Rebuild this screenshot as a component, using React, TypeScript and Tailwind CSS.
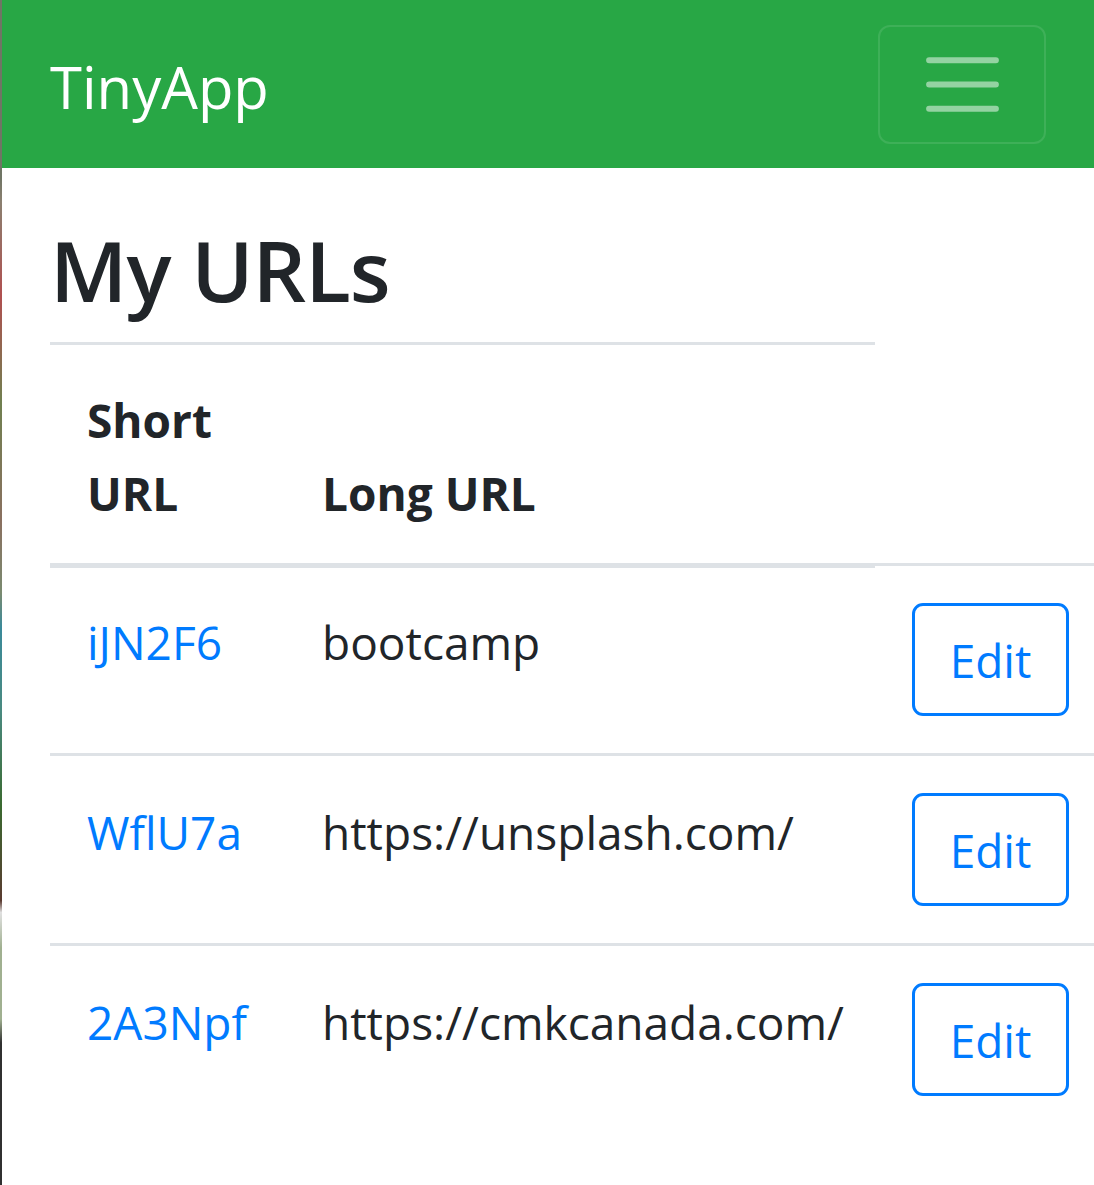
import React from "react";

const rows = [
  { short: "iJN2F6", long: "bootcamp" },
  { short: "WflU7a", long: "https://unsplash.com/" },
  { short: "2A3Npf", long: "https://cmkcanada.com/" },
];

function TogglerIcon() {
  return (
    <svg width="91" height="91" viewBox="0 0 30 30" fill="none">
      <path
        d="M4 7h22M4 15h22M4 23h22"
        stroke="rgba(255,255,255,0.5)"
        strokeWidth="2"
        strokeLinecap="round"
        strokeMiterlimit="10"
      />
    </svg>
  );
}

export default function App() {
  return (
    <div className="flex min-h-[1185px] w-full overflow-hidden bg-white font-['Open_Sans',sans-serif] text-[#212529]">
      <div className="w-[2px] shrink-0 bg-[linear-gradient(to_bottom,#707565_0%,#707565_15%,#8a8070_17%,#b05050_25%,#708050_34%,#8a7060_44%,#7a8a70_50%,#3a8a9a_53%,#4a8a80_60%,#3a6a30_68%,#5a3a30_76%,#e0e0e0_77%,#a0b090_80%,#a0b090_86%,#303030_88%,#303030_100%)]" />
      <div className="flex min-w-0 flex-1 flex-col">
        <nav className="flex h-[168px] items-start justify-between bg-[#28a745] pl-[48px] pr-[48px]">
          <div className="pt-[42px] text-[58px] leading-[90px] text-white">TinyApp</div>
          <div className="mt-[25px] flex h-[119px] w-[168px] items-center justify-center rounded-[12px] border-2 border-white/10">
            <TogglerIcon />
          </div>
        </nav>

        <main className="pl-[48px]">
          <h1 className="mt-[51px] mb-[22px] text-[84px] font-semibold leading-[101px] tracking-[-1px] text-[#212529]">
            My URLs
          </h1>

          <div className="w-[1300px]">
            <div className="flex w-[825px] border-t-[3px] border-b-[5px] border-[#dee2e6] text-[46px] font-bold leading-[73px]">
              <div className="w-[235px] pl-[37px] pt-[39px] pb-[33px]">
                Short
                <br />
                URL
              </div>
              <div className="flex w-[590px] items-end pl-[37px] pb-[33px]">Long URL</div>
            </div>

            {rows.map((r, i) => (
              <div
                key={r.short}
                className={`relative flex border-t-[3px] border-[#dee2e6] text-[46px] leading-[72px] ${
                  i === 0 ? "-mt-[5px]" : ""
                }`}
              >
                <div className="w-[235px] pl-[37px] pt-[40px] text-[#007bff]">{r.short}</div>
                <div className="w-[590px] pl-[37px] pt-[40px] text-[#212529]">{r.long}</div>
                <div className="pl-[37px] pt-[37px] pb-[37px]">
                  <button className="flex h-[113px] w-[157px] items-center justify-center rounded-[11px] border-[3px] border-[#007bff] bg-transparent text-[46px] leading-none text-[#007bff]">
                    Edit
                  </button>
                </div>
              </div>
            ))}
          </div>
        </main>
      </div>
    </div>
  );
}
